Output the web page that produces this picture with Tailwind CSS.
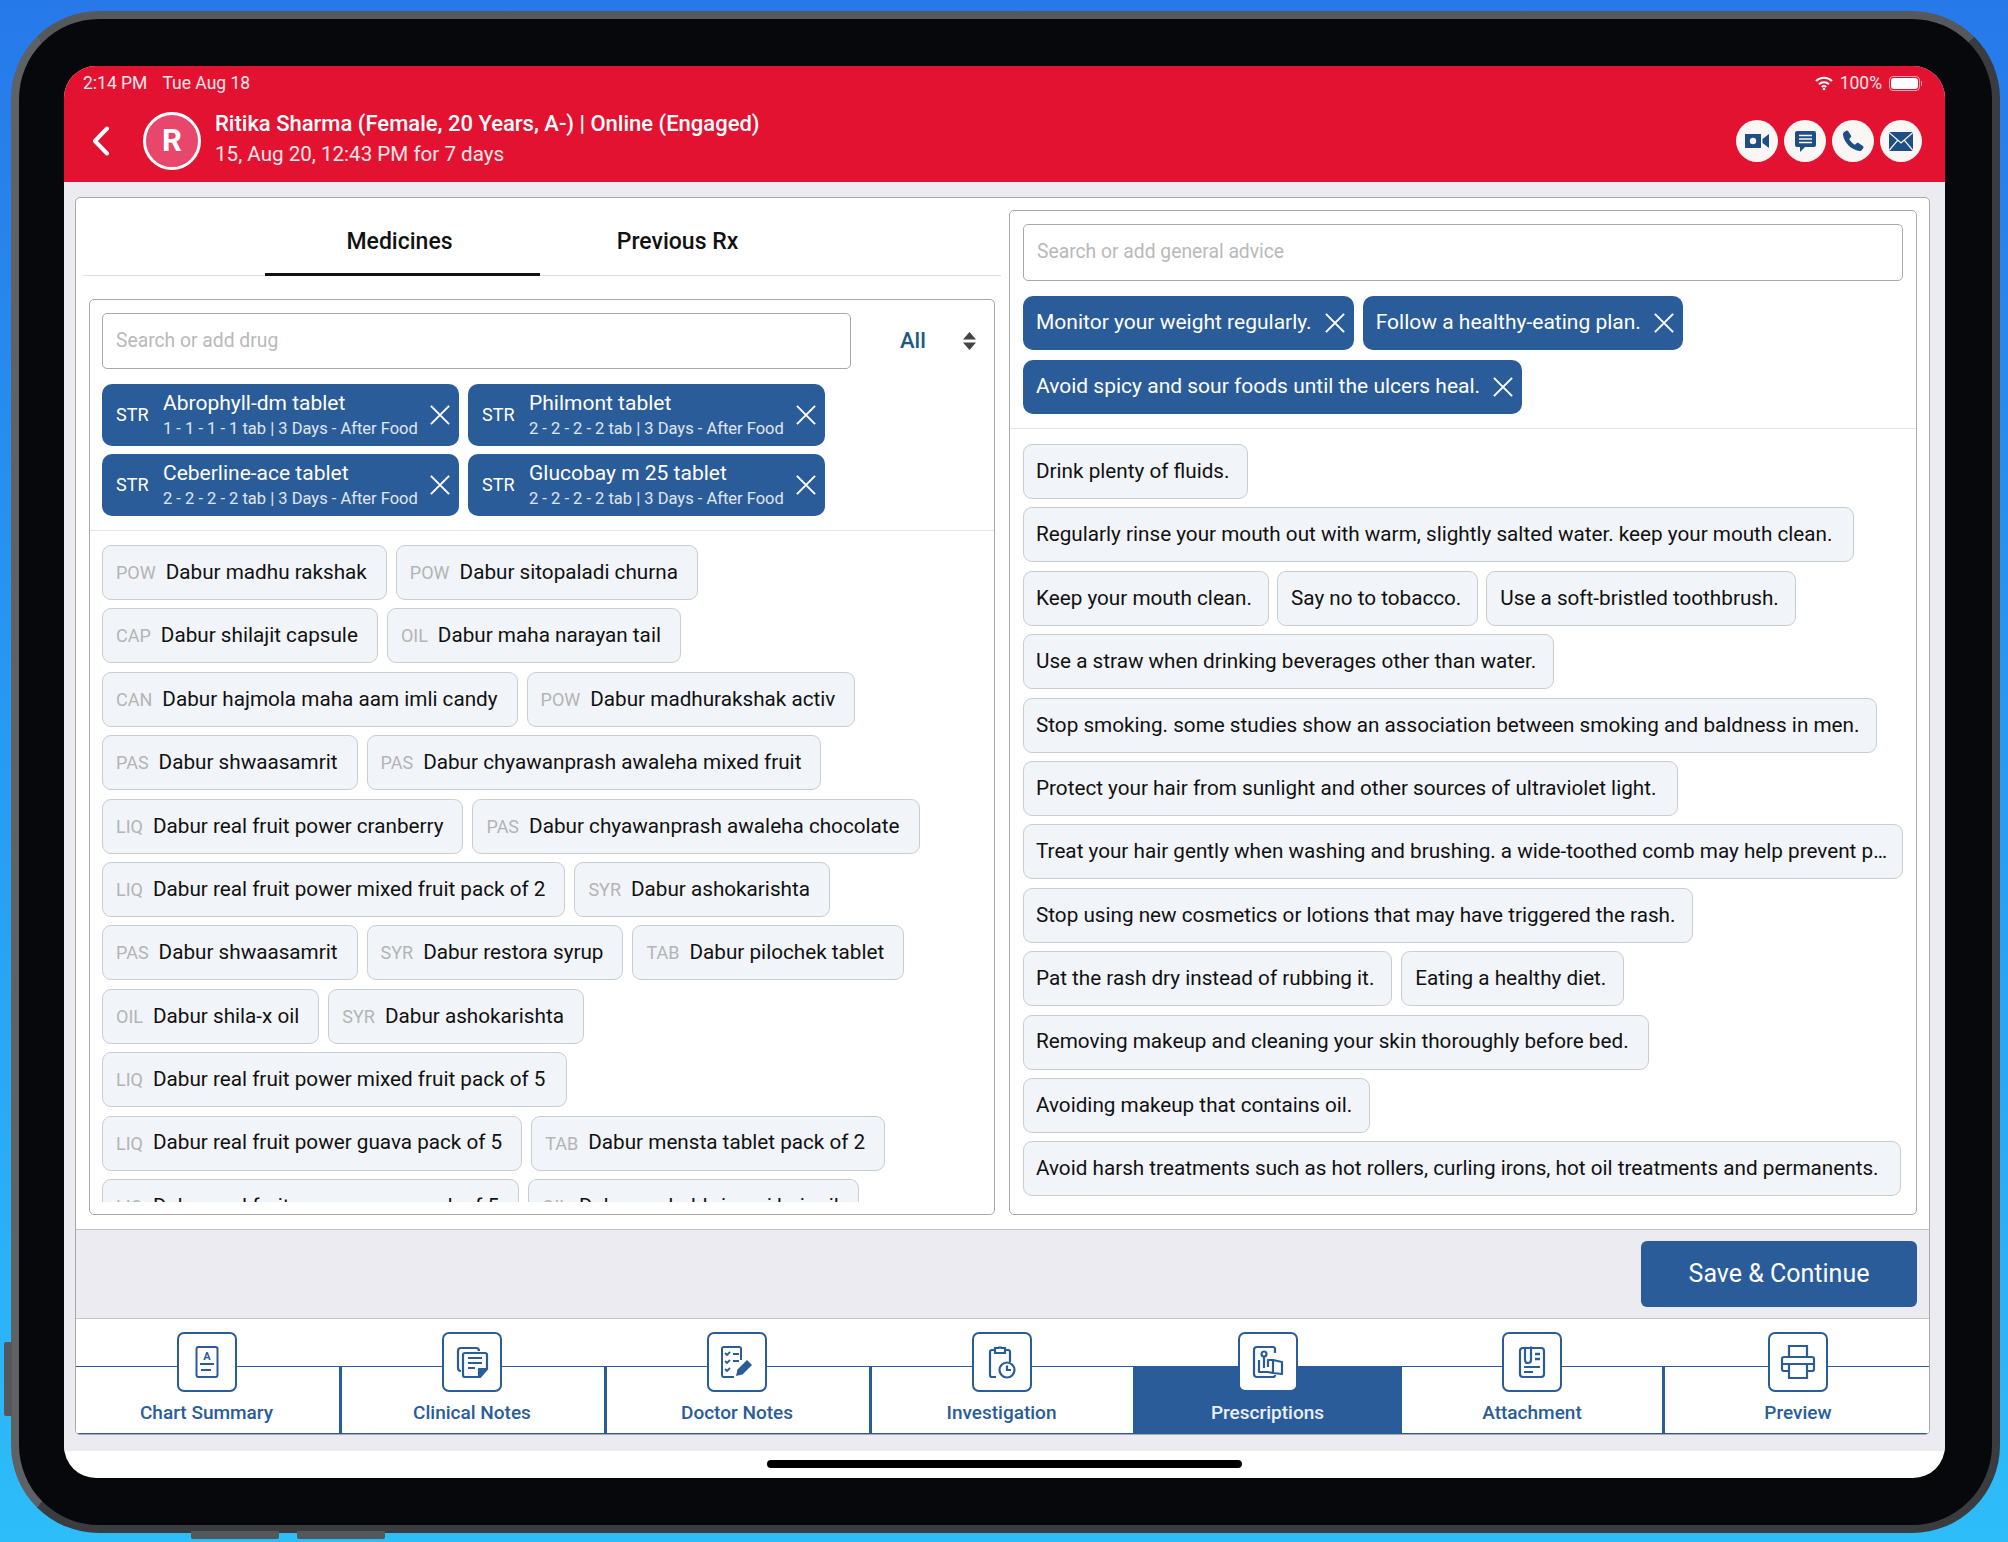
<!DOCTYPE html>
<html lang="en">
<head>
    <meta charset="UTF-8">
    <meta name="viewport" content="width=device-width, initial-scale=1.0">
    <script src="https://cdn.jsdelivr.net/npm/@tailwindcss/browser@4"></script>
    <title>Prescriptions</title>
</head>
<body class="m-0 font-[Roboto,sans-serif]">
<div class="relative h-[1542px] w-[2008px] overflow-hidden bg-linear-to-b from-[#2779ea] to-[#2dbdf9] pl-[11px] pt-[11px]">
    <!-- hardware buttons -->
    <div class="absolute left-[191px] top-[1531px] h-[8px] w-[88px] rounded-b-[2px] bg-[#55585b]"></div>
    <div class="absolute left-[297px] top-[1531px] h-[8px] w-[88px] rounded-b-[2px] bg-[#55585b]"></div>
    <div class="absolute left-[4px] top-[1342px] h-[74px] w-[8px] rounded-l-[2px] bg-[#55585b]"></div>

    <!-- device -->
    <div class="h-[1522px] w-[1989px] rounded-[88px] border-[8px] border-[#3a3c3f] border-l-[#5f6265] border-t-[#56585b] bg-[#06080b] pb-[47px] pl-[45px] pr-[47px] pt-[47px]">
        <div class="flex h-[1412px] w-[1881px] flex-col overflow-hidden rounded-[32px] bg-white">

            <!-- red header -->
            <div class="h-[116px] shrink-0 bg-[#e31230] text-white">
                <div class="flex h-[34px] items-center justify-between pl-[19px] pr-[23px] text-[17.500px] text-white/90">
                    <div class="flex gap-[15px]"><span>2:14 PM</span><span>Tue Aug 18</span></div>
                    <div class="flex items-center gap-[7px]">
                        <svg width="18" height="15" viewBox="0 0 18 15" fill="none" stroke="white" stroke-width="2"><path d="M1 5a11.500 11.500 0 0 1 16 0"/><path d="M4 8.300a7 7 0 0 1 10 0"/><path d="M6.800 11a3 3 0 0 1 4.400 0"/><circle cx="9" cy="13" r="1.300" fill="white" stroke="none"/></svg>
                        <span>100%</span>
                        <div class="flex items-center gap-[1px]">
                            <div class="h-[15px] w-[31px] rounded-[4px] border border-white/60 p-[1px]"><div class="h-full w-full rounded-[3px] bg-white"></div></div>
                            <div class="h-[5px] w-[1px] bg-white/60"></div>
                        </div>
                    </div>
                </div>
                <div class="flex h-[82px] items-center pl-[28px] pr-[23px]">
                    <svg width="18" height="30" viewBox="0 0 18 30" fill="none" stroke="white" stroke-width="4" stroke-linecap="round" stroke-linejoin="round"><path d="M15 2.500 3 15l12 12.500"/></svg>
                    <div class="ml-[33px] flex h-[58px] w-[58px] items-center justify-center rounded-full border-[3px] border-white bg-[#e8476b] text-[31px] font-bold">R</div>
                    <div class="-mt-[5px] ml-[14px] flex-1">
                        <div class="text-[22px] font-medium leading-[31px]">Ritika Sharma (Female, 20 Years, A-) | Online (Engaged)</div>
                        <div class="text-[20.600px] leading-[31px] text-white/90">15, Aug 20, 12:43 PM for 7 days</div>
                    </div>
                    <div class="flex gap-[6px]">
                        <div class="flex h-[42px] w-[42px] items-center justify-center rounded-full bg-[#faf6f4]">
                            <svg width="24" height="14" viewBox="0 0 24 14"><path fill="#1f4e85" fill-rule="evenodd" d="M0 0h16v14H0zM8 3.800a3.200 3.200 0 1 0 0 6.400 3.200 3.200 0 0 0 0-6.400z"/><path fill="#1f4e85" d="M17.500 5 24 0v14l-6.500-5z"/></svg>
                        </div>
                        <div class="flex h-[42px] w-[42px] items-center justify-center rounded-full bg-[#faf6f4]">
                            <svg width="21" height="21" viewBox="0 0 21 21"><path fill="#1f4e85" d="M2 0h17a2 2 0 0 1 2 2v12a2 2 0 0 1-2 2H10l-5 5v-5H2a2 2 0 0 1-2-2V2a2 2 0 0 1 2-2z"/><path stroke="#faf6f4" stroke-width="1.500" d="M4 4.500h13M4 8h13M4 11.500h13"/></svg>
                        </div>
                        <div class="flex h-[42px] w-[42px] items-center justify-center rounded-full bg-[#faf6f4]">
                            <svg width="22" height="22" viewBox="0 0 24 24"><path fill="#1f4e85" d="M6.600 1.200 9.800 6c.4.600.3 1.300-.1 1.800L7.900 9.900c1.300 2.700 3.500 4.900 6.200 6.200l2.100-1.800c.5-.4 1.200-.5 1.800-.1l4.800 3.200c.7.500.9 1.400.4 2.100l-1.300 2c-.7 1-1.900 1.600-3.100 1.400C10.200 21.800 2.200 13.800 1.100 5.200.9 4 1.500 2.800 2.500 2.100l2-1.300c.7-.5 1.600-.3 2.100.4z"/></svg>
                        </div>
                        <div class="flex h-[42px] w-[42px] items-center justify-center rounded-full bg-[#faf6f4]">
                            <svg width="24" height="19" viewBox="0 0 24 19"><rect width="24" height="19" fill="#1f4e85"/><path fill="none" stroke="#faf6f4" stroke-width="1.300" d="M0 0.500 12 11 24 0.500M0 18.500 8.800 8.200M24 18.500 15.200 8.200"/></svg>
                        </div>
                    </div>
                </div>
            </div>

            <!-- gray content area -->
            <div class="h-[1269px] shrink-0 bg-[#ebebf1] pb-[16px] pl-[11px] pr-[15px] pt-[15px]">
                <div class="flex h-full flex-col overflow-hidden rounded-[5px] border-[1.5px] border-[#a9a9a9] bg-white">
                    <div class="flex h-[1031px] shrink-0 pb-[14px]">

                        <!-- left column -->
                        <div class="ml-[7px] flex w-[918px] flex-col">
                            <div class="flex h-[78px] shrink-0 border-b-[1.5px] border-[#dcdcdc] pl-[182px] text-[23px] font-medium leading-[28px] text-[#111]">
                                <div class="h-[78px] w-[275px] border-b-[3px] border-[#111] pr-[6px] pt-[30px] text-center">Medicines</div>
                                <div class="h-[78px] w-[275px] pt-[30px] text-center">Previous Rx</div>
                            </div>
                            <div class="ml-[6px] mt-[23px] flex w-[906px] flex-1 flex-col overflow-hidden rounded-[5px] border-[1.5px] border-[#a9a9a9]">
                                <div class="flex flex-col gap-[15px] border-b-[1.5px] border-[#e4e4e4] pb-[14px] pl-[12px] pt-[13px]">
                                    <div class="flex items-center">
                                        <div class="flex h-[56px] w-[749px] items-center rounded-[5px] border-[1.5px] border-[#a9a9a9] pl-[13px] text-[19.300px] text-[#b9b9b9]">Search or add drug</div>
                                        <div class="-mt-[2px] ml-[49px] text-[22px] font-medium text-[#1b5a85]">All</div>
                                        <svg class="ml-[37px]" width="13" height="18" viewBox="0 0 13 18" fill="#444"><path d="M6.500 0 13 7.500H0zM0 10.500h13L6.500 18z"/></svg>
                                    </div>
                                    <div class="flex w-[730px] flex-wrap gap-x-[9px] gap-y-[8px]">
                                        <div class="flex h-[62px] w-[357px] items-center rounded-[10px] bg-[#2a5c9a] pl-[14px] pr-[9px] text-white">
                                            <span class="-mt-[2px] w-[47px] text-[18px]">STR</span>
                                            <div class="flex-1 whitespace-nowrap"><div class="text-[21px] leading-[26px]">Abrophyll-dm tablet</div><div class="text-[16.500px] leading-[25px] text-white/85">1 - 1 - 1 - 1 tab | 3 Days - After Food</div></div>
                                            <svg width="20" height="20" viewBox="0 0 22 22" stroke="white" stroke-width="2.200"><path d="M1 1l20 20M21 1 1 21"/></svg>
                                        </div>
                                        <div class="flex h-[62px] w-[357px] items-center rounded-[10px] bg-[#2a5c9a] pl-[14px] pr-[9px] text-white">
                                            <span class="-mt-[2px] w-[47px] text-[18px]">STR</span>
                                            <div class="flex-1 whitespace-nowrap"><div class="text-[21px] leading-[26px]">Philmont tablet</div><div class="text-[16.500px] leading-[25px] text-white/85">2 - 2 - 2 - 2 tab | 3 Days - After Food</div></div>
                                            <svg width="20" height="20" viewBox="0 0 22 22" stroke="white" stroke-width="2.200"><path d="M1 1l20 20M21 1 1 21"/></svg>
                                        </div>
                                        <div class="flex h-[62px] w-[357px] items-center rounded-[10px] bg-[#2a5c9a] pl-[14px] pr-[9px] text-white">
                                            <span class="-mt-[2px] w-[47px] text-[18px]">STR</span>
                                            <div class="flex-1 whitespace-nowrap"><div class="text-[21px] leading-[26px]">Ceberline-ace tablet</div><div class="text-[16.500px] leading-[25px] text-white/85">2 - 2 - 2 - 2 tab | 3 Days - After Food</div></div>
                                            <svg width="20" height="20" viewBox="0 0 22 22" stroke="white" stroke-width="2.200"><path d="M1 1l20 20M21 1 1 21"/></svg>
                                        </div>
                                        <div class="flex h-[62px] w-[357px] items-center rounded-[10px] bg-[#2a5c9a] pl-[14px] pr-[9px] text-white">
                                            <span class="-mt-[2px] w-[47px] text-[18px]">STR</span>
                                            <div class="flex-1 whitespace-nowrap"><div class="text-[21px] leading-[26px]">Glucobay m 25 tablet</div><div class="text-[16.500px] leading-[25px] text-white/85">2 - 2 - 2 - 2 tab | 3 Days - After Food</div></div>
                                            <svg width="20" height="20" viewBox="0 0 22 22" stroke="white" stroke-width="2.200"><path d="M1 1l20 20M21 1 1 21"/></svg>
                                        </div>
                                    </div>
                                </div>
                                <div class="mb-[12px] flex-1 overflow-hidden pl-[12px] pr-[12px] pt-[14px]">
                                    <div class="flex flex-col items-start gap-y-[8.400px] text-[20.700px] text-[#111]">
                                        <div class="flex gap-[9px]">
                                            <div class="flex h-[55px] items-center gap-[10px] rounded-[9px] border border-[#c9ccd1] bg-[#f1f4f9] pl-[13px] pr-[19px]"><span class="text-[18px] text-[#b4b4b4]">POW</span>Dabur madhu rakshak</div>
                                            <div class="flex h-[55px] items-center gap-[10px] rounded-[9px] border border-[#c9ccd1] bg-[#f1f4f9] pl-[13px] pr-[19px]"><span class="text-[18px] text-[#b4b4b4]">POW</span>Dabur sitopaladi churna</div>
                                        </div>
                                        <div class="flex gap-[9px]">
                                            <div class="flex h-[55px] items-center gap-[10px] rounded-[9px] border border-[#c9ccd1] bg-[#f1f4f9] pl-[13px] pr-[19px]"><span class="text-[18px] text-[#b4b4b4]">CAP</span>Dabur shilajit capsule</div>
                                            <div class="flex h-[55px] items-center gap-[10px] rounded-[9px] border border-[#c9ccd1] bg-[#f1f4f9] pl-[13px] pr-[19px]"><span class="text-[18px] text-[#b4b4b4]">OIL</span>Dabur maha narayan tail</div>
                                        </div>
                                        <div class="flex gap-[9px]">
                                            <div class="flex h-[55px] items-center gap-[10px] rounded-[9px] border border-[#c9ccd1] bg-[#f1f4f9] pl-[13px] pr-[19px]"><span class="text-[18px] text-[#b4b4b4]">CAN</span>Dabur hajmola maha aam imli candy</div>
                                            <div class="flex h-[55px] items-center gap-[10px] rounded-[9px] border border-[#c9ccd1] bg-[#f1f4f9] pl-[13px] pr-[19px]"><span class="text-[18px] text-[#b4b4b4]">POW</span>Dabur madhurakshak activ</div>
                                        </div>
                                        <div class="flex gap-[9px]">
                                            <div class="flex h-[55px] items-center gap-[10px] rounded-[9px] border border-[#c9ccd1] bg-[#f1f4f9] pl-[13px] pr-[19px]"><span class="text-[18px] text-[#b4b4b4]">PAS</span>Dabur shwaasamrit</div>
                                            <div class="flex h-[55px] items-center gap-[10px] rounded-[9px] border border-[#c9ccd1] bg-[#f1f4f9] pl-[13px] pr-[19px]"><span class="text-[18px] text-[#b4b4b4]">PAS</span>Dabur chyawanprash awaleha mixed fruit</div>
                                        </div>
                                        <div class="flex gap-[9px]">
                                            <div class="flex h-[55px] items-center gap-[10px] rounded-[9px] border border-[#c9ccd1] bg-[#f1f4f9] pl-[13px] pr-[19px]"><span class="text-[18px] text-[#b4b4b4]">LIQ</span>Dabur real fruit power cranberry</div>
                                            <div class="flex h-[55px] items-center gap-[10px] rounded-[9px] border border-[#c9ccd1] bg-[#f1f4f9] pl-[13px] pr-[19px]"><span class="text-[18px] text-[#b4b4b4]">PAS</span>Dabur chyawanprash awaleha chocolate</div>
                                        </div>
                                        <div class="flex gap-[9px]">
                                            <div class="flex h-[55px] items-center gap-[10px] rounded-[9px] border border-[#c9ccd1] bg-[#f1f4f9] pl-[13px] pr-[19px]"><span class="text-[18px] text-[#b4b4b4]">LIQ</span>Dabur real fruit power mixed fruit pack of 2</div>
                                            <div class="flex h-[55px] items-center gap-[10px] rounded-[9px] border border-[#c9ccd1] bg-[#f1f4f9] pl-[13px] pr-[19px]"><span class="text-[18px] text-[#b4b4b4]">SYR</span>Dabur ashokarishta</div>
                                        </div>
                                        <div class="flex gap-[9px]">
                                            <div class="flex h-[55px] items-center gap-[10px] rounded-[9px] border border-[#c9ccd1] bg-[#f1f4f9] pl-[13px] pr-[19px]"><span class="text-[18px] text-[#b4b4b4]">PAS</span>Dabur shwaasamrit</div>
                                            <div class="flex h-[55px] items-center gap-[10px] rounded-[9px] border border-[#c9ccd1] bg-[#f1f4f9] pl-[13px] pr-[19px]"><span class="text-[18px] text-[#b4b4b4]">SYR</span>Dabur restora syrup</div>
                                            <div class="flex h-[55px] items-center gap-[10px] rounded-[9px] border border-[#c9ccd1] bg-[#f1f4f9] pl-[13px] pr-[19px]"><span class="text-[18px] text-[#b4b4b4]">TAB</span>Dabur pilochek tablet</div>
                                        </div>
                                        <div class="flex gap-[9px]">
                                            <div class="flex h-[55px] items-center gap-[10px] rounded-[9px] border border-[#c9ccd1] bg-[#f1f4f9] pl-[13px] pr-[19px]"><span class="text-[18px] text-[#b4b4b4]">OIL</span>Dabur shila-x oil</div>
                                            <div class="flex h-[55px] items-center gap-[10px] rounded-[9px] border border-[#c9ccd1] bg-[#f1f4f9] pl-[13px] pr-[19px]"><span class="text-[18px] text-[#b4b4b4]">SYR</span>Dabur ashokarishta</div>
                                        </div>
                                        <div class="flex gap-[9px]">
                                            <div class="flex h-[55px] items-center gap-[10px] rounded-[9px] border border-[#c9ccd1] bg-[#f1f4f9] pl-[13px] pr-[21px]"><span class="text-[18px] text-[#b4b4b4]">LIQ</span>Dabur real fruit power mixed fruit pack of 5</div>
                                        </div>
                                        <div class="flex gap-[9px]">
                                            <div class="flex h-[55px] items-center gap-[10px] rounded-[9px] border border-[#c9ccd1] bg-[#f1f4f9] pl-[13px] pr-[19px]"><span class="text-[18px] text-[#b4b4b4]">LIQ</span>Dabur real fruit power guava pack of 5</div>
                                            <div class="flex h-[55px] items-center gap-[10px] rounded-[9px] border border-[#c9ccd1] bg-[#f1f4f9] pl-[13px] pr-[19px]"><span class="text-[18px] text-[#b4b4b4]">TAB</span>Dabur mensta tablet pack of 2</div>
                                        </div>
                                        <div class="flex gap-[9px]">
                                            <div class="flex h-[55px] items-center gap-[10px] rounded-[9px] border border-[#c9ccd1] bg-[#f1f4f9] pl-[13px] pr-[19px]"><span class="text-[18px] text-[#b4b4b4]">LIQ</span>Dabur real fruit power grape pack of 5</div>
                                            <div class="flex h-[55px] items-center gap-[10px] rounded-[9px] border border-[#c9ccd1] bg-[#f1f4f9] pl-[13px] pr-[19px]"><span class="text-[18px] text-[#b4b4b4]">OIL</span>Dabur mahabhringraj hair oil</div>
                                        </div>
                                    </div>
                                </div>
                            </div>
                        </div>

                        <!-- right column -->
                        <div class="ml-[8px] mt-[12px] flex w-[908px] flex-col overflow-hidden rounded-[5px] border-[1.5px] border-[#a9a9a9]">
                            <div class="flex flex-col gap-[15px] border-b-[1.5px] border-[#e4e4e4] pb-[14px] pl-[13px] pr-[13px] pt-[13px]">
                                <div class="flex h-[57px] items-center rounded-[5px] border-[1.5px] border-[#a9a9a9] pl-[13px] text-[19.300px] text-[#b9b9b9]">Search or add general advice</div>
                                <div class="flex flex-wrap gap-x-[9px] gap-y-[10px] text-[21px] text-white">
                                    <div class="flex h-[54px] items-center gap-[13px] rounded-[10px] bg-[#2a5c9a] pl-[13px] pr-[9px]">Monitor your weight regularly.<svg width="20" height="20" viewBox="0 0 22 22" stroke="white" stroke-width="2.200"><path d="M1 1l20 20M21 1 1 21"/></svg></div>
                                    <div class="flex h-[54px] items-center gap-[13px] rounded-[10px] bg-[#2a5c9a] pl-[13px] pr-[9px]">Follow a healthy-eating plan.<svg width="20" height="20" viewBox="0 0 22 22" stroke="white" stroke-width="2.200"><path d="M1 1l20 20M21 1 1 21"/></svg></div>
                                    <div class="flex h-[54px] items-center gap-[13px] rounded-[10px] bg-[#2a5c9a] pl-[13px] pr-[9px]">Avoid spicy and sour foods until the ulcers heal.<svg width="20" height="20" viewBox="0 0 22 22" stroke="white" stroke-width="2.200"><path d="M1 1l20 20M21 1 1 21"/></svg></div>
                                </div>
                            </div>
                            <div class="flex flex-col items-start gap-y-[8.400px] whitespace-nowrap pl-[13px] pr-[13px] pt-[15px] text-[20.700px] text-[#111]">
                                <div class="flex h-[55px] items-center rounded-[9px] border border-[#c9ccd1] bg-[#f1f4f9] pl-[12px] pr-[17px]">Drink plenty of fluids.</div>
                                <div class="flex h-[55px] items-center rounded-[9px] border border-[#c9ccd1] bg-[#f1f4f9] pl-[12px] pr-[21px]">Regularly rinse your mouth out with warm, slightly salted water. keep your mouth clean.</div>
                                <div class="flex gap-[8px]">
                                    <div class="flex h-[55px] items-center rounded-[9px] border border-[#c9ccd1] bg-[#f1f4f9] pl-[12px] pr-[16px]">Keep your mouth clean.</div>
                                    <div class="flex h-[55px] items-center rounded-[9px] border border-[#c9ccd1] bg-[#f1f4f9] pl-[13px] pr-[16px]">Say no to tobacco.</div>
                                    <div class="flex h-[55px] items-center rounded-[9px] border border-[#c9ccd1] bg-[#f1f4f9] pl-[13px] pr-[16px]">Use a soft-bristled toothbrush.</div>
                                </div>
                                <div class="flex h-[55px] items-center rounded-[9px] border border-[#c9ccd1] bg-[#f1f4f9] pl-[12px] pr-[17px]">Use a straw when drinking beverages other than water.</div>
                                <div class="flex h-[55px] items-center rounded-[9px] border border-[#c9ccd1] bg-[#f1f4f9] pl-[12px] pr-[17px]">Stop smoking. some studies show an association between smoking and baldness in men.</div>
                                <div class="flex h-[55px] items-center rounded-[9px] border border-[#c9ccd1] bg-[#f1f4f9] pl-[12px] pr-[21px]">Protect your hair from sunlight and other sources of ultraviolet light.</div>
                                <div class="h-[55px] w-full truncate rounded-[9px] border border-[#c9ccd1] bg-[#f1f4f9] pl-[12px] pr-[13px] leading-[53px]">Treat your hair gently when washing and brushing. a wide-toothed comb may help prevent pulling.</div>
                                <div class="flex h-[55px] items-center rounded-[9px] border border-[#c9ccd1] bg-[#f1f4f9] pl-[12px] pr-[17px]">Stop using new cosmetics or lotions that may have triggered the rash.</div>
                                <div class="flex gap-[9px]">
                                    <div class="flex h-[55px] items-center rounded-[9px] border border-[#c9ccd1] bg-[#f1f4f9] pl-[12px] pr-[17px]">Pat the rash dry instead of rubbing it.</div>
                                    <div class="flex h-[55px] items-center rounded-[9px] border border-[#c9ccd1] bg-[#f1f4f9] pl-[13px] pr-[17px]">Eating a healthy diet.</div>
                                </div>
                                <div class="flex h-[55px] items-center rounded-[9px] border border-[#c9ccd1] bg-[#f1f4f9] pl-[12px] pr-[19px]">Removing makeup and cleaning your skin thoroughly before bed.</div>
                                <div class="flex h-[55px] items-center rounded-[9px] border border-[#c9ccd1] bg-[#f1f4f9] pl-[12px] pr-[17px]">Avoiding makeup that contains oil.</div>
                                <div class="flex h-[55px] items-center rounded-[9px] border border-[#c9ccd1] bg-[#f1f4f9] pl-[12px] pr-[21px]">Avoid harsh treatments such as hot rollers, curling irons, hot oil treatments and permanents.</div>
                            </div>
                        </div>
                    </div>

                    <!-- save bar -->
                    <div class="flex h-[90px] shrink-0 items-center justify-end border-y-[1.5px] border-[#c5c5c5] bg-[#ebebf1] pr-[12px]">
                        <div class="flex h-[66px] w-[276px] items-center justify-center rounded-[6px] bg-[#2a5c9a] text-[25px] text-white">Save &amp; Continue</div>
                    </div>

                    <!-- bottom tabs -->
                    <div class="flex-1 bg-white pt-[47px]">
                        <div class="grid h-[69px] grid-cols-[266px_265px_265px_261px_269px_263px_1fr] border-b-[2.500px] border-t-[1.500px] border-[#2a5c9a] text-[19px] font-medium text-[#2a5c9a]">
                            <div class="flex flex-col items-center border-r-[3px] border-[#2a5c9a] pr-[2px]">
                                <div class="-mt-[35px] flex h-[60px] w-[60px] items-center justify-center rounded-[7px] border-[2px] border-[#2a5c9a] bg-white">
                                    <svg width="30" height="34" viewBox="0 0 30 34" fill="none" stroke="#2a5c9a" stroke-width="2"><rect x="4.500" y="2" width="21" height="30" rx="2"/><text x="15" y="15" text-anchor="middle" font-family="Roboto" font-weight="700" font-size="11" fill="#2a5c9a" stroke="none">A</text><path d="M8 19h14M9 25h10" stroke-width="2"/></svg>
                                </div>
                                <div class="mt-[9px] leading-[24px]">Chart Summary</div>
                            </div>
                            <div class="flex flex-col items-center border-r-[3px] border-[#2a5c9a] pr-[2px]">
                                <div class="-mt-[35px] flex h-[60px] w-[60px] items-center justify-center rounded-[7px] border-[2px] border-[#2a5c9a] bg-white">
                                    <svg width="34" height="34" viewBox="0 0 34 34" fill="none" stroke="#2a5c9a" stroke-width="2.200" stroke-linejoin="round"><path d="M6 26a3 3 0 0 1-3-3V6a3 3 0 0 1 3-3h15a3 3 0 0 1 3 3"/><path d="M10 8h20a2 2 0 0 1 2 2v14l-7 8H10a2 2 0 0 1-2-2V10a2 2 0 0 1 2-2z" fill="white"/><path d="M13 13h14M13 18h14M13 23h7"/><path d="M31 24h-7v7z" fill="#2a5c9a"/></svg>
                                </div>
                                <div class="mt-[9px] leading-[24px]">Clinical Notes</div>
                            </div>
                            <div class="flex flex-col items-center border-r-[3px] border-[#2a5c9a] pr-[2px]">
                                <div class="-mt-[35px] flex h-[60px] w-[60px] items-center justify-center rounded-[7px] border-[2px] border-[#2a5c9a] bg-white">
                                    <svg width="34" height="34" viewBox="0 0 34 34" fill="none" stroke="#2a5c9a" stroke-width="2"><path d="M21 15V4a2 2 0 0 0-2-2H4a2 2 0 0 0-2 2v26a2 2 0 0 0 2 2h10"/><path d="M5 8l2 2 3-3M5 16l2 2 3-3M5 24l2 2 3-3" stroke-width="1.800"/><path d="M13 9h6M13 16h6" stroke-width="2.200"/><path fill="#2a5c9a" stroke="none" d="M16 31l1.500-6.500L27 15l5 5-9.500 9.500z"/></svg>
                                </div>
                                <div class="mt-[9px] leading-[24px]">Doctor Notes</div>
                            </div>
                            <div class="flex flex-col items-center pr-[2px]">
                                <div class="-mt-[35px] flex h-[60px] w-[60px] items-center justify-center rounded-[7px] border-[2px] border-[#2a5c9a] bg-white">
                                    <svg width="34" height="36" viewBox="0 0 34 36" fill="none" stroke="#2a5c9a" stroke-width="2.200"><path d="M11 33H7a2 2 0 0 1-2-2V8a2 2 0 0 1 2-2h3M20 6h3a2 2 0 0 1 2 2v10"/><path d="M10 4h3.500a2 2 0 0 1 3 0H20v5H10z"/><circle cx="22" cy="26" r="7.500"/><path d="M22 21.500V26h4"/></svg>
                                </div>
                                <div class="mt-[9px] leading-[24px]">Investigation</div>
                            </div>
                            <div class="flex flex-col items-center bg-[#2a5c9a] text-white/90">
                                <div class="-mt-[35px] flex h-[60px] w-[60px] items-center justify-center rounded-[7px] border-[2px] border-[#2a5c9a] bg-white">
                                    <svg width="34" height="34" viewBox="0 0 34 34" fill="none" stroke="#2a5c9a" stroke-width="2.200" stroke-linejoin="round"><path d="M24 8V4a2 2 0 0 0-2-2H6a3 3 0 0 0-3 3v24a3 3 0 0 0 3 3h16a2 2 0 0 0 2-2"/><circle cx="13" cy="9" r="2.500"/><path d="M13 12v11"/><path d="M8 15v12h9l5 1V15h-5v7M22 15l9 2v12l-9-1"/></svg>
                                </div>
                                <div class="mt-[9px] leading-[24px]">Prescriptions</div>
                            </div>
                            <div class="flex flex-col items-center border-r-[3px] border-[#2a5c9a]">
                                <div class="-mt-[35px] flex h-[60px] w-[60px] items-center justify-center rounded-[7px] border-[2px] border-[#2a5c9a] bg-white">
                                    <svg width="30" height="36" viewBox="0 0 30 36" fill="none" stroke="#2a5c9a" stroke-width="2.200"><rect x="3" y="4" width="24" height="29" rx="3"/><path d="M8 5v11a3 3 0 0 0 6 0V2.500" /><path d="M18 10h5M18 15h5" stroke-width="2.400"/><path d="M7 23h16M7 28h9" stroke-width="2"/></svg>
                                </div>
                                <div class="mt-[9px] leading-[24px]">Attachment</div>
                            </div>
                            <div class="flex flex-col items-center pl-[2px]">
                                <div class="-mt-[35px] flex h-[60px] w-[60px] items-center justify-center rounded-[7px] border-[2px] border-[#2a5c9a] bg-white">
                                    <svg width="36" height="36" viewBox="0 0 36 36" fill="none" stroke="#2a5c9a" stroke-width="2.200"><path d="M9 13V2h18v11"/><path d="M9 27H4a2 2 0 0 1-2-2V15a2 2 0 0 1 2-2h28a2 2 0 0 1 2 2v10a2 2 0 0 1-2 2h-5"/><path d="M3 20h30"/><path d="M9 20h18v14H9z" fill="white"/></svg>
                                </div>
                                <div class="mt-[9px] leading-[24px]">Preview</div>
                            </div>
                        </div>
                    </div>
                </div>
            </div>

            <!-- home indicator -->
            <div class="flex flex-1 justify-center pt-[9px]">
                <div class="h-[8px] w-[475px] rounded-full bg-black"></div>
            </div>
        </div>
    </div>
</div>
</body>
</html>
